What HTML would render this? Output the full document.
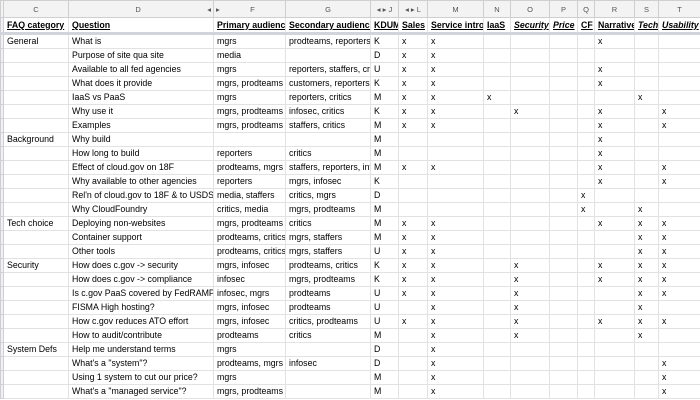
<!DOCTYPE html>
<html><head><style>
body{margin:0;width:700px;height:400px;overflow:hidden;background:#fff;font-family:"Liberation Sans",Arial,sans-serif;}
table{border-collapse:collapse;table-layout:fixed;width:700px;}
td{border:1px solid #e2e2e2;padding:0 0 0 3px;height:13px;font-size:8.8px;line-height:13px;white-space:nowrap;overflow:hidden;color:#000;}
tr.ch td{height:16px;background:#f3f3f3;border-color:#cfcfcf;color:#555;font-size:7.5px;text-align:center;padding:0;}
tr.ti td{height:14px;font-weight:bold;text-decoration:underline;border-bottom:3px solid #d2d4dc;}
.i{font-style:italic}
td.rh{background:#eef2f8;padding:0;border-color:#cfcfcf}
tr.ch td.rh{background:#f3f3f3}
</style></head><body>
<table>
<colgroup><col style="width:3px"><col style="width:65px"><col style="width:145px"><col style="width:72px"><col style="width:85px"><col style="width:28px"><col style="width:29px"><col style="width:56px"><col style="width:27px"><col style="width:39px"><col style="width:28px"><col style="width:17px"><col style="width:40px"><col style="width:24px"><col style="width:42px"></colgroup>
<tr class="ch"><td class="rh"></td><td>C</td><td>D<span style="float:right;margin-right:2px">◂</span></td><td><span style="float:left;margin-left:2px">▸</span>F</td><td>G</td><td>◂ ▸ J</td><td>◂ ▸ L</td><td>M</td><td>N</td><td>O</td><td>P</td><td>Q</td><td>R</td><td>S</td><td>T</td></tr>
<tr class="ti"><td class="rh"></td><td>FAQ category</td><td>Question</td><td>Primary audience</td><td>Secondary audience</td><td>KDUM</td><td>Sales</td><td>Service intro</td><td>IaaS</td><td class="i">Security</td><td class="i">Price</td><td>CF</td><td>Narrative</td><td class="i">Tech</td><td class="i">Usability</td></tr>
<tr><td class="rh"></td><td>General</td><td>What is</td><td>mgrs</td><td>prodteams, reporters</td><td>K</td><td>x</td><td>x</td><td></td><td></td><td></td><td></td><td>x</td><td></td><td></td></tr>
<tr><td class="rh"></td><td></td><td>Purpose of site qua site</td><td>media</td><td></td><td>D</td><td>x</td><td>x</td><td></td><td></td><td></td><td></td><td></td><td></td><td></td></tr>
<tr><td class="rh"></td><td></td><td>Available to all fed agencies</td><td>mgrs</td><td>reporters, staffers, critics</td><td>U</td><td>x</td><td>x</td><td></td><td></td><td></td><td></td><td>x</td><td></td><td></td></tr>
<tr><td class="rh"></td><td></td><td>What does it provide</td><td>mgrs, prodteams</td><td>customers, reporters</td><td>K</td><td>x</td><td>x</td><td></td><td></td><td></td><td></td><td>x</td><td></td><td></td></tr>
<tr><td class="rh"></td><td></td><td>IaaS vs PaaS</td><td>mgrs</td><td>reporters, critics</td><td>M</td><td>x</td><td>x</td><td>x</td><td></td><td></td><td></td><td></td><td>x</td><td></td></tr>
<tr><td class="rh"></td><td></td><td>Why use it</td><td>mgrs, prodteams</td><td>infosec, critics</td><td>K</td><td>x</td><td>x</td><td></td><td>x</td><td></td><td></td><td>x</td><td></td><td>x</td></tr>
<tr><td class="rh"></td><td></td><td>Examples</td><td>mgrs, prodteams</td><td>staffers, critics</td><td>M</td><td>x</td><td>x</td><td></td><td></td><td></td><td></td><td>x</td><td></td><td>x</td></tr>
<tr><td class="rh"></td><td>Background</td><td>Why build</td><td></td><td></td><td>M</td><td></td><td></td><td></td><td></td><td></td><td></td><td>x</td><td></td><td></td></tr>
<tr><td class="rh"></td><td></td><td>How long to build</td><td>reporters</td><td>critics</td><td>M</td><td></td><td></td><td></td><td></td><td></td><td></td><td>x</td><td></td><td></td></tr>
<tr><td class="rh"></td><td></td><td>Effect of cloud.gov on 18F</td><td>prodteams, mgrs</td><td>staffers, reporters, infosec</td><td>M</td><td>x</td><td>x</td><td></td><td></td><td></td><td></td><td>x</td><td></td><td>x</td></tr>
<tr><td class="rh"></td><td></td><td>Why available to other agencies</td><td>reporters</td><td>mgrs, infosec</td><td>K</td><td></td><td></td><td></td><td></td><td></td><td></td><td>x</td><td></td><td>x</td></tr>
<tr><td class="rh"></td><td></td><td>Rel'n of cloud.gov to 18F &amp; to USDS</td><td>media, staffers</td><td>critics, mgrs</td><td>D</td><td></td><td></td><td></td><td></td><td></td><td>x</td><td></td><td></td><td></td></tr>
<tr><td class="rh"></td><td></td><td>Why CloudFoundry</td><td>critics, media</td><td>mgrs, prodteams</td><td>M</td><td></td><td></td><td></td><td></td><td></td><td>x</td><td></td><td>x</td><td></td></tr>
<tr><td class="rh"></td><td>Tech choice</td><td>Deploying non-websites</td><td>mgrs, prodteams</td><td>critics</td><td>M</td><td>x</td><td>x</td><td></td><td></td><td></td><td></td><td>x</td><td>x</td><td>x</td></tr>
<tr><td class="rh"></td><td></td><td>Container support</td><td>prodteams, critics</td><td>mgrs, staffers</td><td>M</td><td>x</td><td>x</td><td></td><td></td><td></td><td></td><td></td><td>x</td><td>x</td></tr>
<tr><td class="rh"></td><td></td><td>Other tools</td><td>prodteams, critics</td><td>mgrs, staffers</td><td>U</td><td>x</td><td>x</td><td></td><td></td><td></td><td></td><td></td><td>x</td><td>x</td></tr>
<tr><td class="rh"></td><td>Security</td><td>How does c.gov -&gt; security</td><td>mgrs, infosec</td><td>prodteams, critics</td><td>K</td><td>x</td><td>x</td><td></td><td>x</td><td></td><td></td><td>x</td><td>x</td><td>x</td></tr>
<tr><td class="rh"></td><td></td><td>How does c.gov -&gt; compliance</td><td>infosec</td><td>mgrs, prodteams</td><td>K</td><td>x</td><td>x</td><td></td><td>x</td><td></td><td></td><td>x</td><td>x</td><td>x</td></tr>
<tr><td class="rh"></td><td></td><td>Is c.gov PaaS covered by FedRAMP</td><td>infosec, mgrs</td><td>prodteams</td><td>U</td><td>x</td><td>x</td><td></td><td>x</td><td></td><td></td><td></td><td>x</td><td>x</td></tr>
<tr><td class="rh"></td><td></td><td>FISMA High hosting?</td><td>mgrs, infosec</td><td>prodteams</td><td>U</td><td></td><td>x</td><td></td><td>x</td><td></td><td></td><td></td><td>x</td><td></td></tr>
<tr><td class="rh"></td><td></td><td>How c.gov reduces ATO effort</td><td>mgrs, infosec</td><td>critics, prodteams</td><td>U</td><td>x</td><td>x</td><td></td><td>x</td><td></td><td></td><td>x</td><td>x</td><td>x</td></tr>
<tr><td class="rh"></td><td></td><td>How to audit/contribute</td><td>prodteams</td><td>critics</td><td>M</td><td></td><td>x</td><td></td><td>x</td><td></td><td></td><td></td><td>x</td><td></td></tr>
<tr><td class="rh"></td><td>System Defs</td><td>Help me understand terms</td><td>mgrs</td><td></td><td>D</td><td></td><td>x</td><td></td><td></td><td></td><td></td><td></td><td></td><td></td></tr>
<tr><td class="rh"></td><td></td><td>What's a "system"?</td><td>prodteams, mgrs</td><td>infosec</td><td>D</td><td></td><td>x</td><td></td><td></td><td></td><td></td><td></td><td></td><td>x</td></tr>
<tr><td class="rh"></td><td></td><td>Using 1 system to cut our price?</td><td>mgrs</td><td></td><td>M</td><td></td><td>x</td><td></td><td></td><td></td><td></td><td></td><td></td><td>x</td></tr>
<tr><td class="rh"></td><td></td><td>What's a "managed service"?</td><td>mgrs, prodteams</td><td></td><td>M</td><td></td><td>x</td><td></td><td></td><td></td><td></td><td></td><td></td><td>x</td></tr>
</table>
</body></html>
